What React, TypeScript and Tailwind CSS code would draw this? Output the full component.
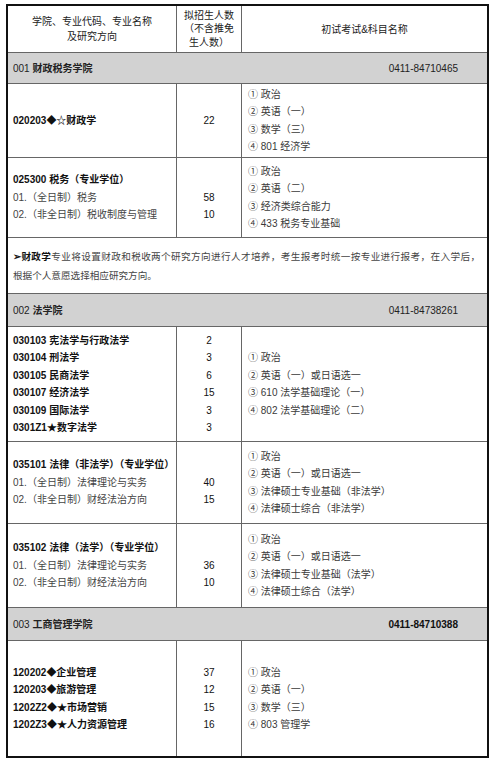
import React from 'react'

const circled = ['①', '②', '③', '④']

type Row = {
  h: string
  left: React.ReactNode[]
  nums: string[]
  right: string[]
}

function Title({ code, name }: { code: string; name: string }) {
  return (
    <span className="font-bold text-[#111]">
      {code}
      <span className="text-[10px]">{name}</span>
    </span>
  )
}

function Dir({ text }: { text: string }) {
  return <span className="text-[#444]">{text}</span>
}

function Section({ code, name, phone, boldPhone }: { code: string; name: string; phone: string; boldPhone?: boolean }) {
  return (
    <div className="col-span-3 flex items-center justify-between bg-[#d2d2d2] border-b border-[#666] pl-[5px] pr-[29px] h-full">
      <span className="text-[#222]">
        {code} <span className="font-bold">{name}</span>
      </span>
      <span className={boldPhone ? 'font-bold text-[#111]' : 'text-[#222]'}>{phone}</span>
    </div>
  )
}

function DataRow({ row, last }: { row: Row; last?: boolean }) {
  const line = 'leading-[17.5px] whitespace-nowrap'
  return (
    <>
      <div className={`${row.h} flex flex-col justify-center pl-[5px] border-r border-[#666] ${last ? '' : 'border-b'} border-b-[#666]`}>
        {row.left.map((l, i) => (
          <div key={i} className={line}>
            {l}
          </div>
        ))}
      </div>
      <div className={`${row.h} flex flex-col justify-center items-center border-r border-[#666] ${last ? '' : 'border-b'} border-b-[#666] text-[#111]`}>
        {row.nums.map((n, i) => (
          <div key={i} className={line}>
            {n || '\u00a0'}
          </div>
        ))}
      </div>
      <div className={`${row.h} flex flex-col justify-center pl-[6px] ${last ? '' : 'border-b'} border-b-[#666] text-[#3a3a3a]`}>
        {row.right.map((r, i) => (
          <div key={i} className={line}>
            {circled[i]} {r}
          </div>
        ))}
      </div>
    </>
  )
}

const finance: Row[] = [
  {
    h: 'h-[74px]',
    left: [<Title code="020203" name="◆☆财政学" />],
    nums: ['22'],
    right: ['政治', '英语（一）', '数学（三）', '801 经济学'],
  },
  {
    h: 'h-[80px]',
    left: [
      <Title code="025300 " name="税务（专业学位）" />,
      <Dir text="01.（全日制）税务" />,
      <Dir text="02.（非全日制）税收制度与管理" />,
    ],
    nums: ['', '58', '10'],
    right: ['政治', '英语（二）', '经济类综合能力', '433 税务专业基础'],
  },
]

const law: Row[] = [
  {
    h: 'h-[115px]',
    left: [
      <Title code="030103 " name="宪法学与行政法学" />,
      <Title code="030104 " name="刑法学" />,
      <Title code="030105 " name="民商法学" />,
      <Title code="030107 " name="经济法学" />,
      <Title code="030109 " name="国际法学" />,
      <Title code="0301Z1" name="★数字法学" />,
    ],
    nums: ['2', '3', '6', '15', '3', '3'],
    right: ['政治', '英语（一）或日语选一', '610 法学基础理论（一）', '802 法学基础理论（二）'],
  },
  {
    h: 'h-[82px]',
    left: [
      <Title code="035101 " name="法律（非法学）（专业学位）" />,
      <Dir text="01.（全日制）法律理论与实务" />,
      <Dir text="02.（非全日制）财经法治方向" />,
    ],
    nums: ['', '40', '15'],
    right: ['政治', '英语（一）或日语选一', '法律硕士专业基础（非法学）', '法律硕士综合（非法学）'],
  },
  {
    h: 'h-[84px]',
    left: [
      <Title code="035102 " name="法律（法学）（专业学位）" />,
      <Dir text="01.（全日制）法律理论与实务" />,
      <Dir text="02.（非全日制）财经法治方向" />,
    ],
    nums: ['', '36', '10'],
    right: ['政治', '英语（一）或日语选一', '法律硕士专业基础（法学）', '法律硕士综合（法学）'],
  },
]

const business: Row = {
  h: 'h-[115px]',
  left: [
    <Title code="120202" name="◆企业管理" />,
    <Title code="120203" name="◆旅游管理" />,
    <Title code="1202Z2" name="◆★市场营销" />,
    <Title code="1202Z3" name="◆★人力资源管理" />,
  ],
  nums: ['37', '12', '15', '16'],
  right: ['政治', '英语（一）', '数学（三）', '803 管理学'],
}

export default function App() {
  return (
    <div className="w-[494px] h-[761px] bg-white pt-[4px] pl-[6px] font-['Liberation_Sans','Noto_Sans_CJK_SC',sans-serif] text-[10px] text-[#222]">
      <div className="w-[483px] border-2 border-[#111] grid grid-cols-[169px_65px_1fr]">
        {/* header */}
        <div className="h-[47px] flex flex-col items-center justify-center text-center leading-[15px] border-r border-b border-[#666]">
          <div>学院、专业代码、专业名称</div>
          <div>及研究方向</div>
        </div>
        <div className="h-[47px] flex flex-col items-center justify-center text-center leading-[13.5px] border-r border-b border-[#666]">
          <div>拟招生人数</div>
          <div>（不含推免</div>
          <div>生人数）</div>
        </div>
        <div className="h-[47px] flex items-center justify-center border-b border-[#666]">初试考试&amp;科目名称</div>

        <div className="col-span-3 h-[31px]">
          <Section code="001" name="财政税务学院" phone="0411-84710465" />
        </div>
        {finance.map((r, i) => (
          <DataRow key={i} row={r} />
        ))}

        {/* note */}
        <div className="col-span-3 h-[56px] flex flex-col justify-center pl-[5px] pr-[7px] border-b border-[#666] text-[#444] text-[9.6px] leading-[19px]">
          <div className="text-justify [text-align-last:justify]">
            <span className="font-bold text-[#111]">➢财政学</span>专业将设置财政和税收两个研究方向进行人才培养，考生报考时统一按专业进行报考，在入学后，
          </div>
          <div>根据个人意愿选择相应研究方向。</div>
        </div>

        <div className="col-span-3 h-[33px]">
          <Section code="002" name="法学院" phone="0411-84738261" />
        </div>
        {law.map((r, i) => (
          <DataRow key={i} row={r} />
        ))}

        <div className="col-span-3 h-[33px]">
          <Section code="003" name="工商管理学院" phone="0411-84710388" boldPhone />
        </div>
        <DataRow row={business} last />
      </div>
    </div>
  )
}
